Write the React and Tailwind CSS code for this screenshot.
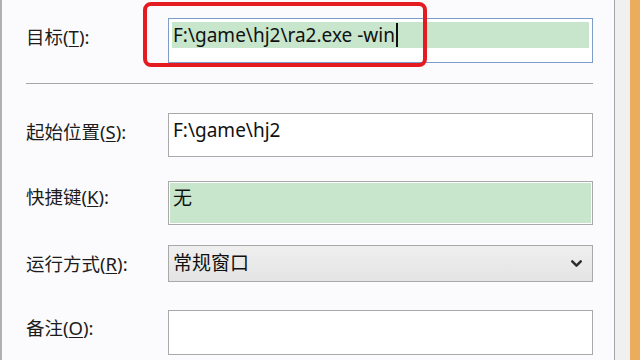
import React from 'react';
import { ChevronDown } from 'lucide-react';

const font = { fontFamily: '"Noto Sans", "Noto Sans CJK SC", sans-serif' };

const Label = ({ text, keyChar, pad = 'pt-[7px]' }) => (
  <div className={`w-[166px] shrink-0 pl-[24px] text-[18.5px] leading-[24px] text-[#1c1c1c] ${pad}`}>
    {text}(<span className="underline underline-offset-[2px]">{keyChar}</span>):
  </div>
);

export default function App() {
  return (
    <div className="flex h-[360px] w-[640px] overflow-hidden bg-[#fbfbfd]" style={font}>
      {/* Dialog panel */}
      <div className="w-[615px] shrink-0 border-l-2 border-r border-l-[#b0b0b0] border-r-[#a4a4a4] pt-[18px]">
        {/* Target */}
        <div className="relative flex items-start">
          <Label text="目标" keyChar="T" />
          <div className="h-[45px] w-[425px] border border-[#7d9dc9] bg-white px-[3px] pt-[3px]">
            <div className="flex h-[26px] items-center bg-[#c7e6cc] text-[19px] leading-[26px] text-[#111]">
              <span className="pl-[1px]">F:\game\hj2\ra2.exe -win</span>
              <span className="ml-[1px] inline-block h-[24px] w-[2px] bg-[#111]" />
            </div>
          </div>
          {/* annotation */}
          <div className="pointer-events-none absolute left-[141px] top-[-16px] h-[65px] w-[284px] rounded-[8px] border-4 border-[#e41b21]" />
        </div>

        <div className="ml-[24px] mt-[20px] h-px w-[567px] bg-[#a6a6a6]" />

        {/* Start in */}
        <div className="mt-[29px] flex items-start">
          <Label text="起始位置" keyChar="S" />
          <div className="h-[44px] w-[425px] border border-[#a9a9a9] bg-white px-[3px] pt-[3px] text-[19px] leading-[26px] text-[#111]">
            <span className="pl-[1px]">F:\game\hj2</span>
          </div>
        </div>

        {/* Shortcut key */}
        <div className="mt-[24px] flex items-start">
          <Label text="快捷键" keyChar="K" pad="pt-[4px]" />
          <div className="h-[44px] w-[425px] border border-[#a9a9a9] bg-white p-px">
            <div className="h-full bg-[#c7e6cc] pl-[3px] pt-[2px] text-[19px] leading-[26px] text-[#111]">无</div>
          </div>
        </div>

        {/* Run */}
        <div className="mt-[20px] flex items-start">
          <Label text="运行方式" keyChar="R" />
          <div className="flex h-[37px] w-[425px] items-center justify-between border border-[#a9a9a9] bg-gradient-to-b from-[#efefef] to-[#e4e4e4] pl-[4px] pr-[7px] text-[19px] text-[#111]">
            <span>常规窗口</span>
            <ChevronDown className="h-[17px] w-[17px] text-[#2e2e2e]" strokeWidth={3.6} />
          </div>
        </div>

        {/* Comment */}
        <div className="mt-[28px] flex items-start">
          <Label text="备注" keyChar="O" pad="pt-[6px]" />
          <div className="h-[45px] w-[425px] border border-[#a9a9a9] bg-white" />
        </div>
      </div>

      <div className="w-[15px] shrink-0 bg-[#f0f0f0]" />
      <div className="flex-1 bg-[#e9ad5d]" />
    </div>
  );
}
